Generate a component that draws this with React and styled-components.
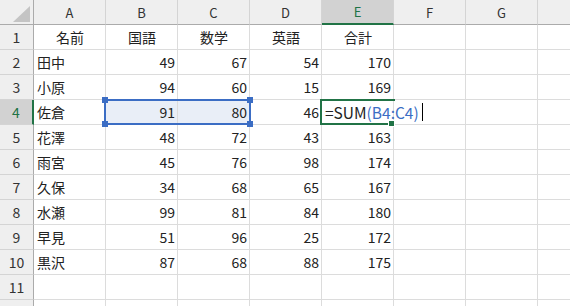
import React from 'react';
import styled, { createGlobalStyle } from 'styled-components';

const GlobalStyle = createGlobalStyle`
  html, body {
    margin: 0;
    padding: 0;
    background: #fff;
    overflow: hidden;
  }
  body {
    font-family: "Noto Sans CJK JP", "Noto Sans", sans-serif;
  }
`;

const GREEN = '#217346';
const BLUE = '#3b6dc4';

// last column (H) and last row (12) are cut off by the window, labels stay empty
const columns = ['A', 'B', 'C', 'D', 'E', 'F', 'G', ''];

const data = [
  ['名前', '国語', '数学', '英語', '合計'],
  ['田中', 49, 67, 54, 170],
  ['小原', 94, 60, 15, 169],
  ['佐倉', 91, 80, 46, null],
  ['花澤', 48, 72, 43, 163],
  ['雨宮', 45, 76, 98, 174],
  ['久保', 34, 68, 65, 167],
  ['水瀬', 99, 81, 84, 180],
  ['早見', 51, 96, 25, 172],
  ['黒沢', 87, 68, 88, 175],
  [],
  [],
];

const Viewport = styled.div`
  width: 570px;
  height: 306px;
  overflow: hidden;
`;

const Sheet = styled.div`
  display: grid;
  grid-template-columns: 34px repeat(8, 72px);
  grid-auto-rows: 25px;
  color: #222;
`;

const Corner = styled.div`
  box-sizing: border-box;
  display: flex;
  justify-content: flex-end;
  align-items: flex-end;
  padding: 0 3px 2px 0;
  background: #efefef;
  border-right: 1px solid #ababab;
  border-bottom: 1px solid #ababab;
`;

const Triangle = styled.div`
  width: 0;
  height: 0;
  border-left: 17px solid transparent;
  border-bottom: 16px solid #c4c4c4;
`;

const ColHead = styled.div`
  box-sizing: border-box;
  display: flex;
  align-items: center;
  justify-content: center;
  font-size: 13px;
  background: ${p => (p.$active ? '#d2d2d2' : '#efefef')};
  color: ${p => (p.$active ? GREEN : '#333')};
  border-right: 1px solid #d4d4d4;
  border-bottom: ${p => (p.$active ? `2px solid ${GREEN}` : '1px solid #ababab')};
`;

const RowHead = styled.div`
  box-sizing: border-box;
  display: flex;
  align-items: center;
  justify-content: center;
  font-size: 14px;
  background: ${p => (p.$active ? '#d2d2d2' : '#efefef')};
  color: ${p => (p.$active ? GREEN : '#333')};
  border-right: ${p => (p.$active ? `2px solid ${GREEN}` : '1px solid #ababab')};
  border-bottom: 1px solid #d4d4d4;
`;

const Cell = styled.div`
  box-sizing: border-box;
  position: relative;
  display: flex;
  align-items: center;
  justify-content: ${p =>
    p.$align === 'right' ? 'flex-end' : p.$align === 'center' ? 'center' : 'flex-start'};
  padding: 0 2px 0 3px;
  font-size: 14px;
  white-space: nowrap;
  background: ${p => (p.$range ? '#e9eef7' : 'transparent')};
  border-right: 1px solid #dcdcdc;
  border-bottom: 1px solid #dcdcdc;
`;

const RangeBox = styled.div`
  box-sizing: border-box;
  position: absolute;
  left: -2px;
  top: -1px;
  width: 147px;
  height: 26px;
  border: 2px solid ${BLUE};
  z-index: 2;
  pointer-events: none;
`;

const Handle = styled.span`
  position: absolute;
  width: 6px;
  height: 6px;
  background: ${BLUE};
  ${p => (p.$top ? 'top: -4px;' : 'bottom: -4px;')}
  ${p => (p.$left ? 'left: -4px;' : 'right: -4px;')}
`;

const ActiveBox = styled.div`
  box-sizing: border-box;
  position: absolute;
  left: -2px;
  top: -1px;
  width: 75px;
  height: 26px;
  border: 2px solid ${GREEN};
  border-right: none;
  z-index: 2;
  pointer-events: none;
`;

const FillHandle = styled.span`
  position: absolute;
  right: 0;
  bottom: -4px;
  width: 5px;
  height: 5px;
  background: ${GREEN};
  border: 1px solid #fff;
`;

const Formula = styled.span`
  position: relative;
  z-index: 3;
  display: inline-flex;
  align-items: center;
  font-size: 15.5px;
`;

const Ref = styled.span`
  color: ${BLUE};
`;

const Caret = styled.span`
  display: inline-block;
  width: 1px;
  height: 18px;
  margin-left: 3px;
  background: #000;
`;

const renderCell = (rowIdx, colIdx) => {
  const row = data[rowIdx] || [];
  const value = row[colIdx];
  const key = `c-${rowIdx}-${colIdx}`;

  if (rowIdx === 3 && colIdx === 4) {
    return (
      <Cell key={key}>
        <Formula>
          =SUM<Ref>(B4:C4)</Ref>
          <Caret />
        </Formula>
        <ActiveBox>
          <FillHandle />
        </ActiveBox>
      </Cell>
    );
  }

  const inRange = rowIdx === 3 && (colIdx === 1 || colIdx === 2);
  const align = rowIdx === 0 ? 'center' : typeof value === 'number' ? 'right' : 'left';

  return (
    <Cell key={key} $align={align} $range={inRange}>
      {value}
      {rowIdx === 3 && colIdx === 1 && (
        <RangeBox>
          <Handle $top $left />
          <Handle $top />
          <Handle $left />
          <Handle />
        </RangeBox>
      )}
    </Cell>
  );
};

const App = () => {
  return (
    <Viewport>
      <GlobalStyle />
      <Sheet>
        <Corner>
          <Triangle />
        </Corner>
        {columns.map((c, i) => (
          <ColHead key={i} $active={c === 'E'}>
            {c}
          </ColHead>
        ))}
        {data.map((_, r) => (
          <React.Fragment key={r}>
            <RowHead $active={r === 3}>{r < 11 ? r + 1 : ''}</RowHead>
            {columns.map((_, c) => renderCell(r, c))}
          </React.Fragment>
        ))}
      </Sheet>
    </Viewport>
  );
};

export default App;
